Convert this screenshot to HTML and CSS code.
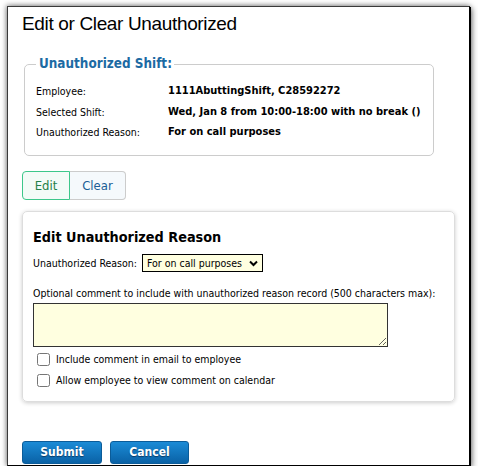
FILE: index.html
```html
<!DOCTYPE html>
<html>
<head>
<meta charset="utf-8">
<link rel="stylesheet" href="styles.css">
</head>
<body>
<div class="dialog">
  <h1 class="title">Edit or Clear Unauthorized</h1>
  <fieldset class="shift">
    <legend>Unauthorized Shift:</legend>
    <div class="info">
      <span class="lbl">Employee:</span><span class="val">1111AbuttingShift, C28592272</span>
      <span class="lbl">Selected Shift:</span><span class="val">Wed, Jan 8 from 10:00-18:00 with no break ()</span>
      <span class="lbl">Unauthorized Reason:</span><span class="val">For on call purposes</span>
    </div>
  </fieldset>
  <div class="tabs">
    <button class="tab active">Edit</button><button class="tab">Clear</button>
  </div>
  <div class="card">
    <h2 class="card-title">Edit Unauthorized Reason</h2>
    <div class="reason-row">
      <span>Unauthorized Reason:</span>
      <span class="select-wrap">
        <select class="select"><option>For on call purposes</option></select>
        <svg class="chev" width="9" height="7" viewBox="0 0 9 7"><path d="M1 1.5 L4.5 5 L8 1.5" fill="none" stroke="#000" stroke-width="2"/></svg>
      </span>
    </div>
    <div class="comment-label">Optional comment to include with unauthorized reason record (500 characters max):</div>
    <textarea class="comment"></textarea>
    <label class="check"><input type="checkbox"> Include comment in email to employee</label>
    <label class="check"><input type="checkbox"> Allow employee to view comment on calendar</label>
  </div>
  <div class="actions">
    <button class="btn">Submit</button>
    <button class="btn">Cancel</button>
  </div>
</div>
</body>
</html>
```
FILE: styles.css
```css
html, body { margin: 0; padding: 0; background: #fff; }
body { font-family: "DejaVu Sans Condensed", "DejaVu Sans", sans-serif; font-size: 10.5px; color: #000; }

.dialog {
  box-sizing: border-box;
  margin: 6px 0 0 7px;
  width: 463px;
  height: 460px;
  border: 1px solid #3a3a3a;
  border-right-color: #000;
  border-bottom-color: #000;
  box-shadow: 1px 1px 0 #000, 2px 2px 6px rgba(0,0,0,0.55), -1px -1px 5px rgba(0,0,0,0.35);
  background: #fff;
  padding: 0 0 0 14px;
}

.title {
  font-family: "Liberation Sans", Arial, sans-serif;
  font-weight: normal;
  font-size: 19px;
  letter-spacing: -0.35px;
  line-height: 24px;
  margin: 0;
  padding-top: 5px;
  height: 24px;
}

.shift {
  margin: 19px 0 0 2px;
  width: 410px;
  box-sizing: border-box;
  padding: 0 11px 12px;
  border: 1px solid #ccc;
  border-radius: 5px;
}
.shift legend {
  padding: 0 2px 0 3px;
  color: #1c6aa3;
  font-weight: bold;
  font-size: 13.4px;
  line-height: 18px;
}
.info {
  display: grid;
  grid-template-columns: 132px auto;
  line-height: 20.5px;
  margin-top: 8px;
}
.val { font-weight: bold; font-size: 11px; }

.tabs { display: flex; margin-top: 15px; }
.tab {
  font-family: inherit;
  font-size: 13px;
  height: 29px;
  border: 1px solid #ccc;
  background: #f5f9fc;
  color: #1b5e96;
  padding: 0;
  margin: 0;
}
.tab.active {
  width: 48px;
  border-color: #3dc78a;
  background: #f3fbf7;
  color: #1f8048;
  border-radius: 4px 0 0 4px;
}
.tab:not(.active) {
  width: 56px;
  border-left: none;
  border-radius: 0 4px 4px 0;
}

.card {
  box-sizing: border-box;
  margin-top: 11px;
  width: 433px;
  height: 191px;
  border: 1px solid #ddd;
  border-radius: 5px;
  box-shadow: 0 1px 4px rgba(0,0,0,0.2);
  padding: 0 10px;
}
.card-title {
  margin: 0;
  padding-top: 16px;
  font-size: 14.3px;
  line-height: 18px;
  font-weight: bold;
}
.reason-row {
  display: flex;
  align-items: center;
  gap: 5px;
  margin-top: 8px;
  height: 18px;
}
.select-wrap { position: relative; display: inline-block; height: 18px; }
.select {
  appearance: none;
  -webkit-appearance: none;
  display: block;
  font-family: inherit;
  font-size: 10.5px;
  width: 121px;
  height: 18px;
  border: 1px solid #000;
  border-radius: 0;
  background: #ffffe0;
  padding: 0 0 0 4px;
  margin: 0;
  color: #000;
}
.chev { position: absolute; right: 5px; top: 6px; pointer-events: none; }

.comment-label { margin-top: 13px; line-height: 16px; white-space: nowrap; }
.comment {
  display: block;
  width: 355px;
  height: 44px;
  box-sizing: border-box;
  margin: 2px 0 0 0;
  border: 1px solid #333;
  background: #ffffe0;
  resize: both;
}
.check { display: flex; align-items: center; line-height: 15px; margin-top: 5px; }
.check + .check { margin-top: 6px; }
.check input { margin: 0 6px 0 4px; width: 13px; height: 13px; }

.actions { display: flex; gap: 8px; margin-top: 39px; }
.btn {
  font-family: inherit;
  font-weight: bold;
  font-size: 12px;
  color: #fff;
  text-shadow: 0 1px 1px #0a3a66;
  height: 23px;
  border: 1px solid #0b5c99;
  border-radius: 3px;
  background: linear-gradient(#1b8bd6, #0a62a6);
  padding: 0;
}
.btn:first-child { width: 80px; }
.btn:last-child { width: 79px; }
```
